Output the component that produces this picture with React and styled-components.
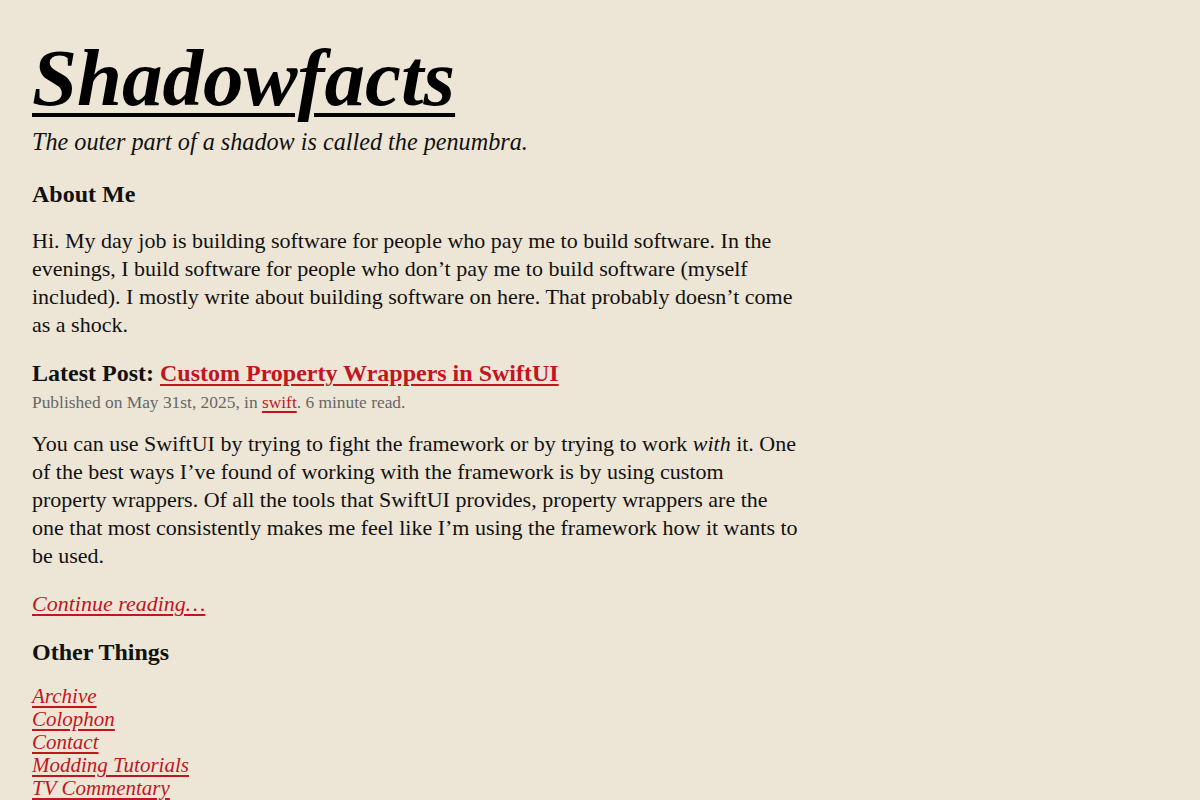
import React from "react";
import styled, { createGlobalStyle } from "styled-components";

const Global = createGlobalStyle`
  html, body {
    margin: 0;
    padding: 0;
    background: #ede6d6;
    color: #111;
    font-family: "Liberation Serif", "DejaVu Serif", serif;
  }
`;

const Page = styled.main`
  padding: 36px 32px 0;
  max-width: 769px;
`;

const Masthead = styled.header`
  margin-bottom: 22px;
`;

const Title = styled.h1`
  margin: 0;
  font-size: 81px;
  line-height: 84px;
  font-weight: 700;
  font-style: italic;
  a {
    color: #000;
    text-decoration: underline;
    text-decoration-thickness: 4px;
    text-underline-offset: 8px;
  }
`;

const Tagline = styled.p`
  margin: 7px 0 0;
  font-size: 24.2px;
  line-height: 30px;
  font-style: italic;
`;

const Heading = styled.h2`
  margin: 0 0 ${(p) => (p.$flush ? 0 : 18)}px;
  font-size: 24px;
  line-height: 30px;
  font-weight: 700;
`;

const Section = styled.section`
  margin-bottom: 19px;
`;

const Para = styled.p`
  margin: 0 0 ${(p) => p.$gap ?? 20}px;
  font-size: 22px;
  line-height: 28px;
`;

const RedLink = styled.a`
  color: #c1161e;
  text-decoration: underline;
  text-decoration-thickness: 2px;
  text-underline-offset: 3px;
  font-style: ${(p) => (p.$italic ? "italic" : "inherit")};
`;

const Meta = styled.p`
  margin: 3px 0 17px;
  font-size: 17.4px;
  line-height: 22px;
  color: #666;
`;

const Links = styled.ul`
  list-style: none;
  margin: 1px 0 0;
  padding: 0;
  font-size: 21px;
  line-height: 23px;
`;

const LinkItem = styled.li`
  margin: 0;
`;

const otherThings = ["Archive", "Colophon", "Contact", "Modding Tutorials", "TV Commentary"];

export default function App() {
  return (
    <>
      <Global />
      <Page>
        <Masthead>
          <Title>
            <a href="#">Shadowfacts</a>
          </Title>
          <Tagline>The outer part of a shadow is called the penumbra.</Tagline>
        </Masthead>

        <Section>
          <Heading>About Me</Heading>
          <Para $gap={0}>
            Hi. My day job is building software for people who pay me to build
            software. In the evenings, I build software for people who don’t pay
            me to build software (myself included). I mostly write about building
            software on here. That probably doesn’t come as a shock.
          </Para>
        </Section>

        <Section>
          <Heading $flush>
            Latest Post: <RedLink href="#">Custom Property Wrappers in SwiftUI</RedLink>
          </Heading>
          <Meta>
            Published on May 31st, 2025, in <RedLink href="#">swift</RedLink>. 6
            minute read.
          </Meta>
          <Para>
            You can use SwiftUI by trying to fight the framework or by trying to
            work <em>with</em> it. One of the best ways I’ve found of working with
            the framework is by using custom property wrappers. Of all the tools
            that SwiftUI provides, property wrappers are the one that most
            consistently makes me feel like I’m using the framework how it wants
            to be&nbsp;used.
          </Para>
          <Para $gap={0}>
            <RedLink href="#" $italic>
              Continue reading…
            </RedLink>
          </Para>
        </Section>

        <Section>
          <Heading>Other Things</Heading>
          <Links>
            {otherThings.map((label) => (
              <LinkItem key={label}>
                <RedLink href="#" $italic>
                  {label}
                </RedLink>
              </LinkItem>
            ))}
          </Links>
        </Section>
      </Page>
    </>
  );
}
